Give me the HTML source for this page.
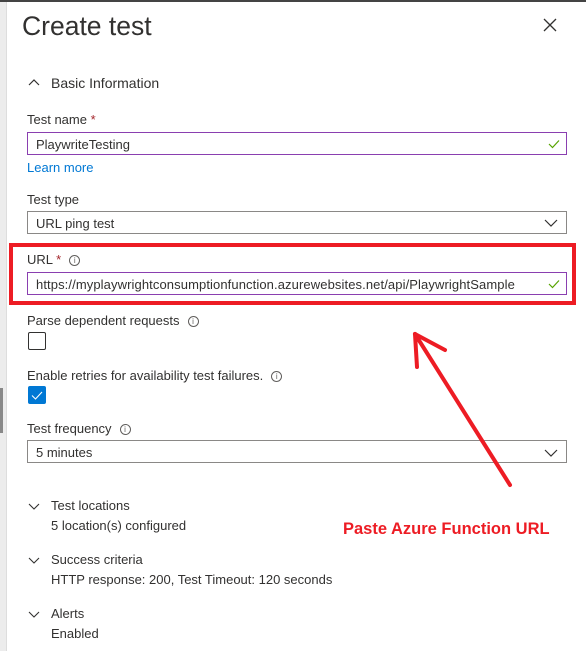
<!DOCTYPE html>
<html><head><meta charset="utf-8"><style>
*{margin:0;padding:0;box-sizing:border-box}
body{width:586px;height:651px;overflow:hidden;background:#fff;font-family:"Liberation Sans",sans-serif;color:#323130;position:relative;font-size:13px}
.a{position:absolute}
.lbl{position:absolute;left:27px;font-size:13px;color:#323130}
.inp{position:absolute;left:27px;width:540px;height:23px;border:1px solid #8a8886;font-size:13px;padding:4px 8px;white-space:nowrap}
.pur{border-color:#8a3fb0}
.req{color:#a4262c}
.info{display:inline-block;width:11px;height:11px;border:1px solid #605e5c;border-radius:50%;font-size:8px;text-align:center;line-height:9px;vertical-align:1px;margin-left:8px;color:#605e5c}
</style></head><body>
<div class="a" style="left:0;top:0;width:586px;height:2px;background:#444"></div>
<div class="a" style="left:0;top:2px;width:7px;height:649px;background:#ececec;border-right:1px solid #ddd"></div>
<div class="a" style="left:0;top:388px;width:3px;height:45px;background:#888"></div>
<div class="a" style="left:22px;top:11px;font-size:26.5px;color:#323130">Create test</div>
<svg class="a" style="left:543px;top:18px" width="14" height="14"><path d="M1 1L13 13M13 1L1 13" stroke="#323130" stroke-width="1.3"/></svg>
<svg class="a" style="left:28px;top:78px" width="12" height="8"><path d="M1 7L6 2L11 7" stroke="#323130" fill="none" stroke-width="1.2"/></svg>
<div class="a" style="left:51px;top:75px;font-size:14px">Basic Information</div>
<div class="lbl" style="top:112px">Test name <span class="req">*</span></div>
<div class="inp pur" style="top:132px">PlaywriteTesting</div>
<svg class="a" style="left:548px;top:139px" width="12" height="10"><path d="M1 5L4.5 8.5L11 1.5" stroke="#57a300" fill="none" stroke-width="1.2"/></svg>
<div class="a" style="left:27px;top:160px;color:#0078d4">Learn more</div>
<div class="lbl" style="top:192px">Test type</div>
<div class="inp" style="top:211px">URL ping test</div>
<svg class="a" style="left:544px;top:219px" width="14" height="8"><path d="M1 1L7 7L13 1" stroke="#323130" fill="none" stroke-width="1.2"/></svg>
<div class="lbl" style="top:252px">URL <span class="req">*</span><span class="info">i</span></div>
<div class="inp pur" style="top:272px;letter-spacing:0.1px">https://myplaywrightconsumptionfunction.azurewebsites.net/api/PlaywrightSample</div>
<svg class="a" style="left:548px;top:279px" width="12" height="10"><path d="M1 5L4.5 8.5L11 1.5" stroke="#57a300" fill="none" stroke-width="1.2"/></svg>
<div class="a" style="left:9px;top:243px;width:567px;height:62px;border:4px solid #ed1c24"></div>
<div class="lbl" style="top:313px">Parse dependent requests<span class="info">i</span></div>
<div class="a" style="left:28px;top:332px;width:18px;height:18px;border:1px solid #323130;border-radius:2px"></div>
<div class="lbl" style="top:368px">Enable retries for availability test failures.<span class="info">i</span></div>
<div class="a" style="left:28px;top:386px;width:18px;height:18px;background:#0078d4;border-radius:2px"></div>
<svg class="a" style="left:31px;top:391px" width="12" height="9"><path d="M1 4.5L4.5 8L11 1" stroke="#fff" fill="none" stroke-width="1.1"/></svg>
<div class="lbl" style="top:421px">Test frequency<span class="info">i</span></div>
<div class="inp" style="top:440px">5 minutes</div>
<svg class="a" style="left:544px;top:449px" width="14" height="8"><path d="M1 1L7 7L13 1" stroke="#323130" fill="none" stroke-width="1.2"/></svg>
<svg class="a" style="left:0;top:0" width="586" height="651"><g stroke="#ed1c24" stroke-width="4" stroke-linecap="round" fill="none"><path d="M510 485L415 334"/><path d="M415 334L445 350"/><path d="M415 334L417 367"/></g></svg>
<div class="a" style="left:343px;top:520px;color:#ed1c24;font-weight:bold;font-size:16.5px">Paste Azure Function URL</div>
<svg class="a" style="left:28px;top:503px" width="12" height="8"><path d="M1 1L6 6L11 1" stroke="#323130" fill="none" stroke-width="1.1"/></svg>
<div class="a" style="left:51px;top:498px">Test locations</div>
<div class="a" style="left:51px;top:518px">5 location(s) configured</div>
<svg class="a" style="left:28px;top:557px" width="12" height="8"><path d="M1 1L6 6L11 1" stroke="#323130" fill="none" stroke-width="1.1"/></svg>
<div class="a" style="left:51px;top:552px">Success criteria</div>
<div class="a" style="left:51px;top:572px">HTTP response: 200, Test Timeout: 120 seconds</div>
<svg class="a" style="left:28px;top:611px" width="12" height="8"><path d="M1 1L6 6L11 1" stroke="#323130" fill="none" stroke-width="1.1"/></svg>
<div class="a" style="left:51px;top:606px">Alerts</div>
<div class="a" style="left:51px;top:626px">Enabled</div>
</body></html>
